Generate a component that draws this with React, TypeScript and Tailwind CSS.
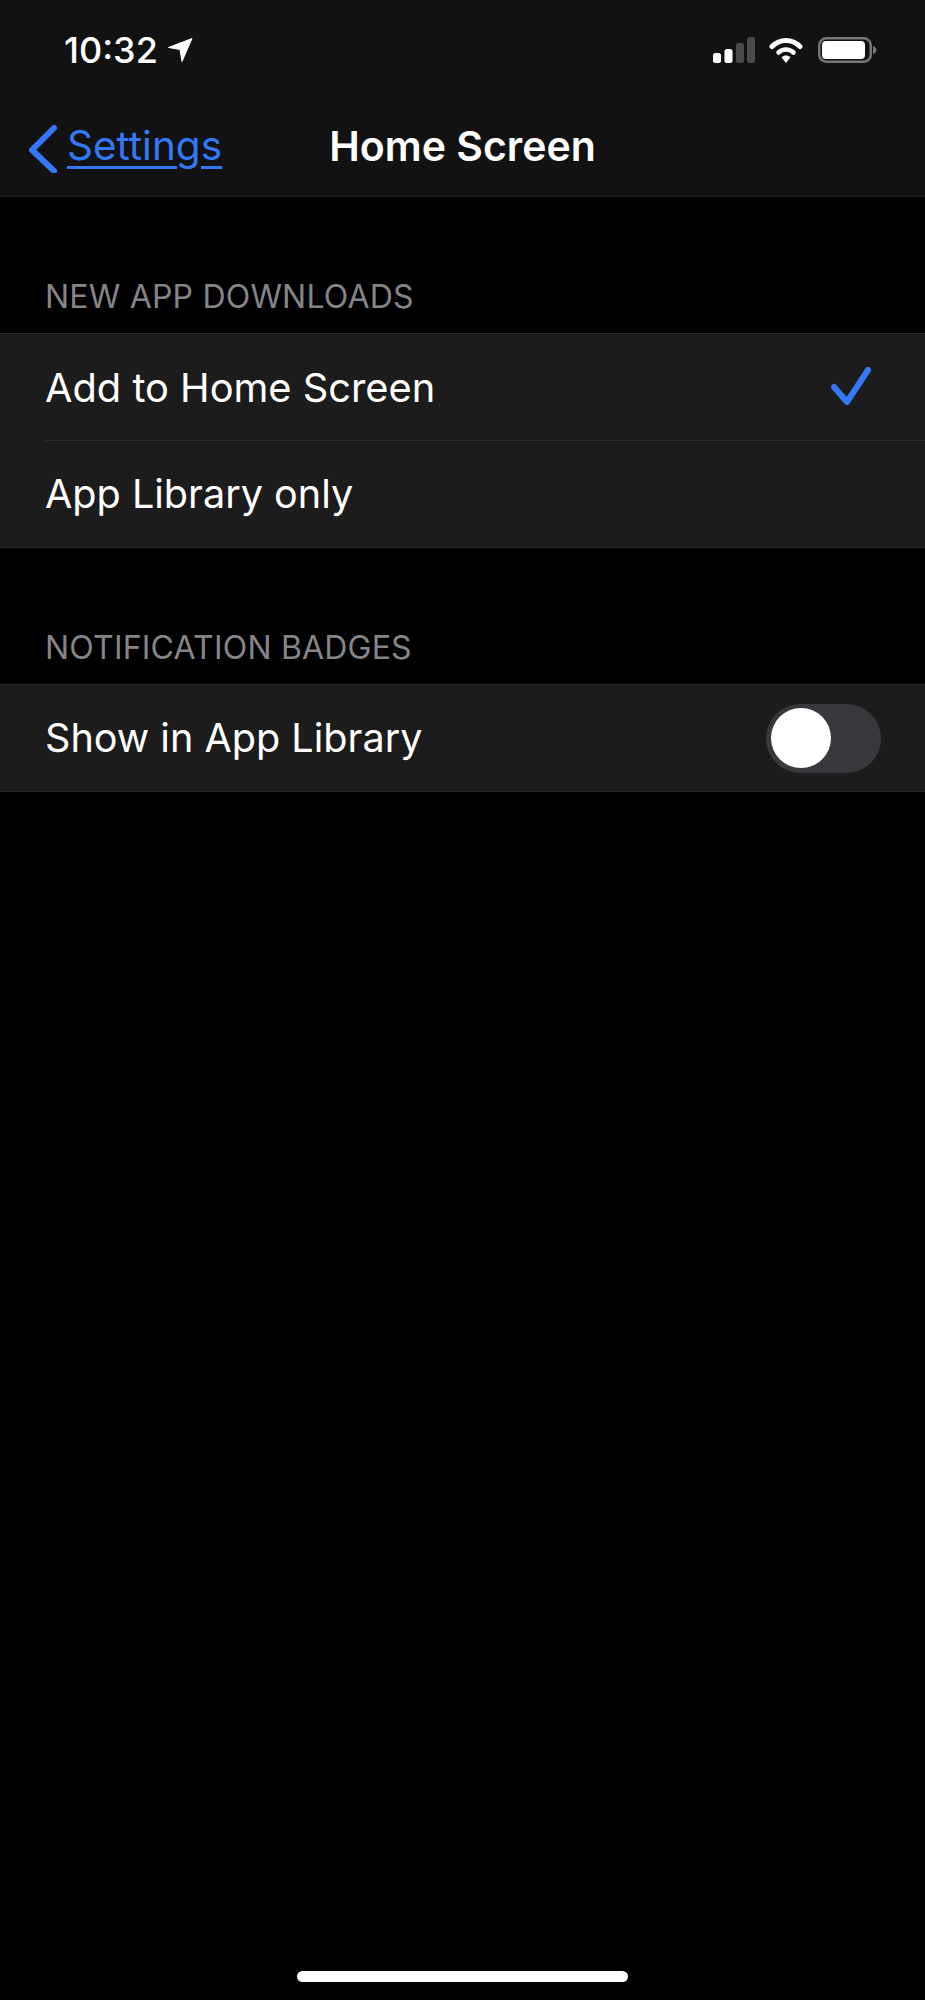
import React from "react";

const font = { fontFamily: "Inter, 'Liberation Sans', sans-serif" };

function StatusIcons() {
  return (
    <div className="flex items-center">
      <svg width="42" height="26" viewBox="0 0 42 26" className="mr-[14px]">
        <rect x="0" y="16" width="8" height="10" rx="2.5" fill="#fff" />
        <rect x="11.5" y="12" width="8" height="14" rx="2.5" fill="#fff" />
        <rect x="23" y="6" width="8" height="20" rx="2.5" fill="#4b4b4d" />
        <rect x="34" y="0" width="8" height="26" rx="2.5" fill="#4b4b4d" />
      </svg>
      <svg width="34" height="26" viewBox="0 0 34 26" className="mr-[15px]">
        <path d="M3 9.5C11 1.5 23 1.5 31 9.5" fill="none" stroke="#fff" strokeWidth="5" strokeLinecap="round" />
        <path d="M9.5 15.5C13.800 11.500 20.200 11.500 24.500 15.500" fill="none" stroke="#fff" strokeWidth="4.500" strokeLinecap="round" />
        <path d="M12.500 20.300C15.300 17.800 18.700 17.800 21.500 20.300L17 26Z" fill="#fff" />
      </svg>
      <svg width="59" height="26" viewBox="0 0 59 26">
        <rect x="1.250" y="1.250" width="51.500" height="23.500" rx="7" fill="none" stroke="#77777a" strokeWidth="2.500" />
        <rect x="4" y="4" width="43" height="18" rx="4" fill="#fff" />
        <path d="M55 9C57.500 10 58.500 11.500 58.500 13C58.500 14.500 57.500 16 55 17Z" fill="#77777a" />
      </svg>
    </div>
  );
}

function SectionLabel({ children }: { children: React.ReactNode }) {
  return (
    <div className="h-[38px] pl-[45px] text-[32px] leading-[38px] tracking-[0.2px] text-[#858588]">
      {children}
    </div>
  );
}

export default function App() {
  return (
    <div className="h-[2000px] w-[925px] overflow-hidden bg-black text-white flex flex-col" style={font}>
      <header className="h-[197px] bg-[#121212] border-b border-[#232325]">
        <div className="flex items-center justify-between h-[100px] pl-[64px] pr-[48px]">
          <div className="flex items-center">
            <span className="text-[36px] font-medium leading-none">10:32</span>
            <svg width="25" height="24" viewBox="0 0 25 24" className="ml-[10px]">
              <path d="M24 0.500L0.500 9.500L12 11.500L14 23.500Z" fill="#fff" stroke="#fff" strokeWidth="1" strokeLinejoin="round" />
            </svg>
          </div>
          <StatusIcons />
        </div>
        <div className="relative flex items-center h-[92px] pl-[28px]">
          <svg width="30" height="48" viewBox="0 0 30 48" className="mr-[9px] mt-[5px]">
            <path d="M26 3L4 25L26 46" fill="none" stroke="#3478f6" strokeWidth="6" strokeLinecap="round" strokeLinejoin="round" />
          </svg>
          <span className="text-[40.5px] leading-none text-[#3478f6] underline underline-offset-[6px] decoration-[3px]">Settings</span>
          <span className="absolute left-0 right-0 text-center text-[41px] font-semibold leading-none pointer-events-none">Home Screen</span>
        </div>
      </header>

      <div className="mt-[81px]">
        <SectionLabel>NEW APP DOWNLOADS</SectionLabel>
      </div>
      <section className="mt-[17px] bg-[#1c1c1c] border-y border-[#2a2a2c]">
        <div className="flex items-center justify-between h-[106px] pl-[45px] pr-[54px] text-[39.8px]">
          <span className="pt-[2px]">Add to Home Screen</span>
          <svg width="40" height="40" viewBox="0 0 40 40" className="mt-[-1px]">
            <path d="M3 20L16 35L37 3" fill="none" stroke="#3478f6" strokeWidth="6" strokeLinecap="round" strokeLinejoin="round" />
          </svg>
        </div>
        <div className="ml-[45px] h-px bg-[#2e2e30]" />
        <div className="flex items-center h-[106px] pl-[45px] text-[39.6px]">
          <span className="pt-[2px]">App Library only</span>
        </div>
      </section>

      <div className="mt-[81px]">
        <SectionLabel>NOTIFICATION BADGES</SectionLabel>
      </div>
      <section className="mt-[17px] bg-[#1c1c1c] border-y border-[#2a2a2c]">
        <div className="flex items-center justify-between h-[106px] pl-[45px] pr-[44px] text-[39.6px]">
          <span className="pt-[2px]">Show in App Library</span>
          <div className="flex items-center h-[69px] w-[115px] rounded-full bg-[#39393d] pl-[5px]">
            <div className="h-[60px] w-[60px] rounded-full bg-white" />
          </div>
        </div>
      </section>

      <div className="mt-auto mb-[18px] flex justify-center">
        <div className="h-[11px] w-[331px] rounded-full bg-white" />
      </div>
    </div>
  );
}
